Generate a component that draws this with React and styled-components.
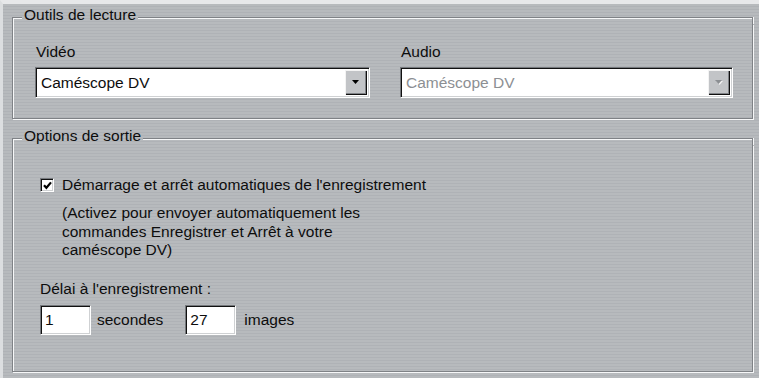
import styled, { createGlobalStyle } from 'styled-components';

const GlobalStyle = createGlobalStyle`
  html, body {
    margin: 0;
    padding: 0;
  }
  body {
    font-family: 'Liberation Sans', Arial, sans-serif;
    color: #0d0d0d;
  }
`;

const dark = '#7f8286';
const light = '#f6f7f8';

const Page = styled.div`
  box-sizing: border-box;
  width: 759px;
  height: 378px;
  overflow: hidden;
  border-top: 4px solid #e7e8ea;
  border-left: 3px solid #dcdee0;
  padding: 2px 6px 0 9px;
  background: repeating-linear-gradient(
    to bottom,
    #b7babd 0px,
    #b7babd 2px,
    #afb2b6 2px,
    #afb2b6 3px
  );
  font-size: 15.5px;
`;

const Group = styled.section`
  display: flex;
  flex-direction: column;
  margin-top: ${(p) => p.$gap || 0}px;
`;

const GroupHead = styled.div`
  display: flex;
  height: 18px;
`;

const Corner = styled.div`
  width: 9px;
  margin-top: 11px;
  border-top: 1px solid ${dark};
  border-left: 1px solid ${dark};
  box-shadow: inset 1px 1px 0 ${light};
`;

const Title = styled.span`
  padding: 0 2px;
  line-height: 18px;
  white-space: nowrap;
`;

const Rule = styled.div`
  flex: 1;
  margin-top: 11px;
  border-top: 1px solid ${dark};
  border-right: 1px solid ${dark};
  box-shadow: inset 0 1px 0 ${light}, 1px 0 0 ${light};
`;

const GroupBody = styled.div`
  border: 1px solid ${dark};
  border-top: none;
  box-shadow: inset 1px 0 0 ${light}, 1px 1px 0 ${light};
  padding: ${(p) => p.$pad};
`;

const Columns = styled.div`
  display: grid;
  grid-template-columns: 335px 333px;
  column-gap: 30px;
`;

const Label = styled.div`
  line-height: 18px;
  padding-left: 1px;
  white-space: nowrap;
`;

const Combo = styled.div`
  box-sizing: border-box;
  display: flex;
  height: 31px;
  margin-top: 6px;
  padding: 2px;
  background: #fff;
  border: 1px solid;
  border-color: #75787c #ffffff #ffffff #75787c;
  box-shadow: inset 1px 1px 0 #111, inset -1px -1px 0 #cfd1d3;
`;

const ComboText = styled.span`
  flex: 1;
  padding-left: 3px;
  line-height: 25px;
  color: ${(p) => (p.$disabled ? '#8c8f93' : '#0d0d0d')};
`;

const ArrowButton = styled.span`
  box-sizing: border-box;
  width: 22px;
  display: flex;
  align-items: center;
  justify-content: center;
  background: #c2c4c7;
  box-shadow: inset 1px 1px 0 #f3f3f3, inset -1px -1px 0 #101010,
    inset -2px -2px 0 #808387;
  padding: 0 1px 1px 0;
`;

const Arrow = ({ disabled }) => (
  <svg width="9" height="6" viewBox="0 0 9 6">
    {disabled && <polygon points="2,2 9,2 5.5,6" fill="#f2f2f2" />}
    <polygon points="1,1 8,1 4.5,5" fill={disabled ? '#8c8f93' : '#000'} />
  </svg>
);

const CheckRow = styled.label`
  display: flex;
  align-items: center;
  line-height: 18px;
  white-space: nowrap;
`;

const CheckBox = styled.span`
  box-sizing: border-box;
  width: 14px;
  height: 14px;
  margin-right: 8px;
  display: flex;
  align-items: center;
  justify-content: center;
  background: #fff;
  border: 1px solid;
  border-color: #75787c #ffffff #ffffff #75787c;
  box-shadow: inset 1px 1px 0 #111, inset -1px -1px 0 #cfd1d3;
`;

const Hint = styled.p`
  margin: 10px 0 0 22px;
  line-height: 18.5px;
`;

const DelayLabel = styled.div`
  margin-top: 20px;
  line-height: 18px;
`;

const FieldRow = styled.div`
  display: flex;
  align-items: center;
  margin-top: 7px;
`;

const NumberField = styled.span`
  box-sizing: border-box;
  width: 51px;
  height: 30px;
  padding-left: 4px;
  line-height: 28px;
  background: #fff;
  border: 1px solid;
  border-color: #75787c #ffffff #ffffff #75787c;
  box-shadow: inset 1px 1px 0 #111, inset -1px -1px 0 #cfd1d3;
`;

const Unit = styled.span`
  margin: 0 ${(p) => p.$after || 0}px 0 ${(p) => p.$before}px;
`;

const ComboBox = ({ value, disabled }) => (
  <Combo>
    <ComboText $disabled={disabled}>{value}</ComboText>
    <ArrowButton>
      <Arrow disabled={disabled} />
    </ArrowButton>
  </Combo>
);

const GroupBox = ({ title, gap, pad, children }) => (
  <Group $gap={gap}>
    <GroupHead>
      <Corner />
      <Title>{title}</Title>
      <Rule />
    </GroupHead>
    <GroupBody $pad={pad}>{children}</GroupBody>
  </Group>
);

export default function App() {
  return (
    <Page>
      <GlobalStyle />
      <GroupBox title="Outils de lecture" pad="19px 0 20px 22px">
        <Columns>
          <div>
            <Label>Vidéo</Label>
            <ComboBox value="Caméscope DV" />
          </div>
          <div>
            <Label>Audio</Label>
            <ComboBox value="Caméscope DV" disabled />
          </div>
        </Columns>
      </GroupBox>
      <GroupBox title="Options de sortie" gap={8} pad="31px 0 36px 27px">
        <CheckRow>
          <CheckBox>
            <svg width="9" height="9" viewBox="0 0 9 9">
              <polyline
                points="1,4.2 3.4,6.8 8,1.4"
                fill="none"
                stroke="#000"
                strokeWidth="2.2"
              />
            </svg>
          </CheckBox>
          Démarrage et arrêt automatiques de l'enregistrement
        </CheckRow>
        <Hint>
          (Activez pour envoyer automatiquement les
          <br />
          commandes Enregistrer et Arrêt à votre
          <br />
          caméscope DV)
        </Hint>
        <DelayLabel>Délai à l'enregistrement :</DelayLabel>
        <FieldRow>
          <NumberField>1</NumberField>
          <Unit $before={6} $after={22}>secondes</Unit>
          <NumberField>27</NumberField>
          <Unit $before={8}>images</Unit>
        </FieldRow>
      </GroupBox>
    </Page>
  );
}
